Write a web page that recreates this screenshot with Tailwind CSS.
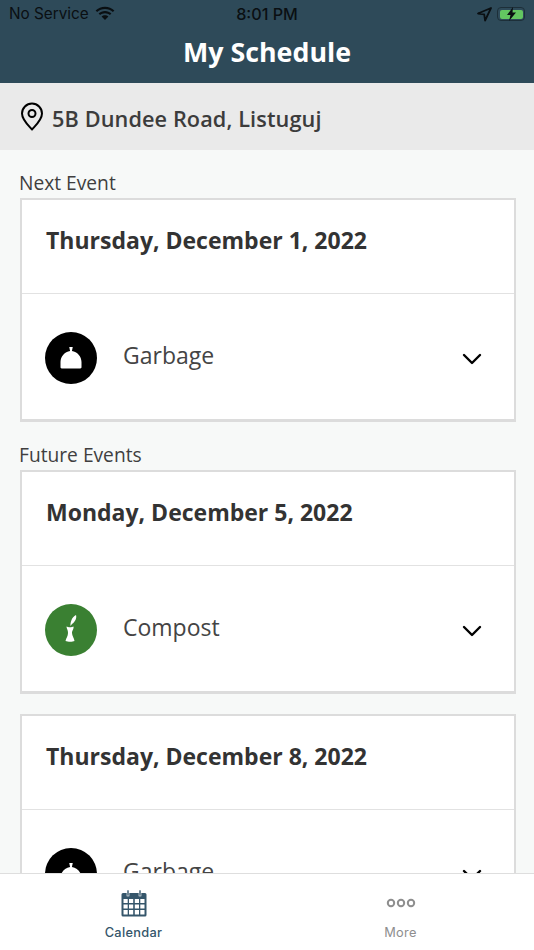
<!DOCTYPE html>
<html lang="en">
<head>
    <meta charset="UTF-8">
    <meta name="viewport" content="width=device-width, initial-scale=1.0">
    <title>My Schedule</title>
    <script src="https://cdn.jsdelivr.net/npm/@tailwindcss/browser@4"></script>
</head>
<body class="w-[534px] h-[950px] overflow-hidden bg-[#f7f9f8] font-['Open_Sans','Noto_Sans',sans-serif]">
    <div class="flex flex-col h-[950px]">
        <!-- Header -->
        <header class="h-[83px] shrink-0 bg-[#2e4a59]">
            <div class="h-[28px] flex items-center justify-between pl-[9px] pr-[9px] font-['Inter',sans-serif] text-[15.300px] text-[#0a0f12]">
                <div class="flex-1 flex items-center gap-[6px]">
                    <span>No Service</span>
                    <svg class="w-[20px] h-[15px] mb-[2px]" viewBox="0 0 20 15"><path d="M10 3c3 0 5.800 1.100 7.900 3.100l1.500-1.600C16.900 2.100 13.600.7 10 .7S3.100 2.100.6 4.500l1.500 1.600C4.200 4.100 7 3 10 3z" fill="#0a0f12"/><path d="M10 7.200c1.900 0 3.600.7 4.900 1.900l1.500-1.600C14.700 5.900 12.500 5 10 5s-4.700.9-6.400 2.500l1.500 1.600C6.400 7.900 8.100 7.200 10 7.200z" fill="#0a0f12"/><path d="M10 9.200c-1.300 0-2.500.5-3.400 1.300L10 14l3.400-3.500c-.9-.8-2.100-1.300-3.400-1.300z" fill="#0a0f12"/></svg>
                </div>
                <span class="font-medium text-[16.200px]">8:01 PM</span>
                <div class="flex-1 flex items-center justify-end gap-[5px]">
                    <svg class="w-[15px] h-[15px]" viewBox="0 0 15 15"><path d="M14 1L1 6.500l6.200.9.900 6.100z" fill="none" stroke="#0a0f12" stroke-width="1.800" stroke-linejoin="round"/></svg>
                    <div class="relative w-[28px] h-[14px] rounded-[4px] border border-[#1d2f39] p-[1.500px] flex">
                        <div class="flex-1 rounded-[2px] bg-[#63c661]"></div>
                        <svg class="absolute left-[7px] top-[-1px] w-[13px] h-[14px]" viewBox="0 0 13 14"><path d="M8 0L2 8h3.500L4 14l7-8.500H7.500z" fill="#0a0f12"/></svg>
                    </div>
                </div>
            </div>
            <h1 class="mt-[6px] text-center text-white text-[26.800px] leading-[36px] font-bold">My Schedule</h1>
        </header>

        <!-- Address -->
        <div class="h-[67px] shrink-0 bg-[#eaeaea] flex items-center pl-[20px] gap-[8px]">
            <svg class="w-[24px] h-[29px]" viewBox="0 0 24 29" fill="none" stroke="#000" stroke-width="2"><path d="M12 27.500C9 24 2 18 2 11.500a10 10 0 0 1 20 0C22 18 15 24 12 27.500z" stroke-linejoin="round"/><circle cx="12" cy="11.500" r="3.500"/></svg>
            <span class="mt-[5px] text-[21.700px] leading-[30px] font-semibold text-[#3c3c3c] tracking-[0.1px]">5B Dundee Road, Listuguj</span>
        </div>

        <!-- Event list -->
        <main class="flex-1 overflow-hidden pl-[20px] pr-[18px]">
            <h2 class="mt-[19px] -ml-[1px] text-[19.200px] leading-[27px] text-[#3f3f3f]">Next Event</h2>
            <section class="mt-[2px] h-[224px] bg-white border-2 border-b-[3px] border-[#dcdcdc] overflow-hidden">
                <div class="h-[94px] pl-[24px] pt-[23px] border-b border-[#e2e2e2] text-[23px] leading-[34px] font-bold text-[#333]">Thursday, December 1, 2022</div>
                <div class="h-[125px] flex items-center pl-[23px] pr-[32px] pt-[2px]">
                    <div class="w-[52px] h-[52px] rounded-full bg-black flex items-center justify-center">
                        <svg class="w-[28px] h-[28px]" viewBox="0 0 24 24"><path d="M10.500 2.500h3l-.700 3.500c4.500.700 8.200 4.500 8.200 9.500v4.500c0 .600-.400 1-1 1H4c-.600 0-1-.400-1-1v-4.500C3 10.500 6.700 6.700 11.200 6z" fill="#fff"/></svg>
                    </div>
                    <span class="ml-[26px] text-[23px] text-[#444] mb-[5px]">Garbage</span>
                    <svg class="ml-auto w-[20px] h-[12px] mt-[2px]" viewBox="0 0 20 12" fill="none" stroke="#000" stroke-width="2.400" stroke-linecap="round" stroke-linejoin="round"><path d="M2 2l8 8 8-8"/></svg>
                </div>
            </section>

            <h2 class="mt-[19px] -ml-[1px] text-[19.200px] leading-[27px] text-[#3f3f3f]">Future Events</h2>
            <section class="mt-[2px] h-[224px] bg-white border-2 border-b-[3px] border-[#dcdcdc] overflow-hidden">
                <div class="h-[94px] pl-[24px] pt-[23px] border-b border-[#e2e2e2] text-[23px] leading-[34px] font-bold text-[#333]">Monday, December 5, 2022</div>
                <div class="h-[125px] flex items-center pl-[23px] pr-[32px] pt-[2px]">
                    <div class="w-[52px] h-[52px] rounded-full bg-[#3a8032] flex items-center justify-center">
                        <svg class="w-[24px] h-[34px]" viewBox="0 0 24 34"><path d="M17 2c1 3-1 7-4 9l-1.500 2c-.300-3 1-9 5.500-11z" fill="#fff"/><path d="M7.500 13.500c1.500 1 5.500 1 7 0 .500 3-1.500 3.500-1.500 6.500s2.200 5 2.500 8c-2 1-6.500 1-9 0 .500-3 2.500-4.500 2.500-8s-1.200-3.500-1.500-6.500z" fill="#fff"/></svg>
                    </div>
                    <span class="ml-[26px] text-[23px] text-[#444] mb-[5px]">Compost</span>
                    <svg class="ml-auto w-[20px] h-[12px] mt-[2px]" viewBox="0 0 20 12" fill="none" stroke="#000" stroke-width="2.400" stroke-linecap="round" stroke-linejoin="round"><path d="M2 2l8 8 8-8"/></svg>
                </div>
            </section>

            <section class="mt-[20px] h-[224px] bg-white border-2 border-b-[3px] border-[#dcdcdc] overflow-hidden">
                <div class="h-[94px] pl-[24px] pt-[23px] border-b border-[#e2e2e2] text-[23px] leading-[34px] font-bold text-[#333]">Thursday, December 8, 2022</div>
                <div class="h-[125px] flex items-center pl-[23px] pr-[32px] pt-[2px]">
                    <div class="w-[52px] h-[52px] rounded-full bg-black flex items-center justify-center">
                        <svg class="w-[28px] h-[28px]" viewBox="0 0 24 24"><path d="M10.500 2.500h3l-.700 3.500c4.500.700 8.200 4.500 8.200 9.500v4.500c0 .600-.400 1-1 1H4c-.600 0-1-.400-1-1v-4.500C3 10.500 6.700 6.700 11.200 6z" fill="#fff"/></svg>
                    </div>
                    <span class="ml-[26px] text-[23px] text-[#444] mb-[5px]">Garbage</span>
                    <svg class="ml-auto w-[20px] h-[12px] mt-[2px]" viewBox="0 0 20 12" fill="none" stroke="#000" stroke-width="2.400" stroke-linecap="round" stroke-linejoin="round"><path d="M2 2l8 8 8-8"/></svg>
                </div>
            </section>
        </main>

        <!-- Tab bar -->
        <nav class="h-[77px] shrink-0 bg-white border-t border-[#dedede] flex font-['Inter',sans-serif]">
            <div class="flex-1 flex flex-col items-center pt-[15px] text-[#35566b]">
                <svg class="w-[26px] h-[28px]" viewBox="0 0 26 28"><path d="M2 4h22a1.500 1.500 0 0 1 1.500 1.500V26a1.500 1.500 0 0 1-1.500 1.500H2A1.500 1.500 0 0 1 .5 26V5.500A1.500 1.500 0 0 1 2 4z" fill="#35566b"/><rect x="6" y="1" width="2" height="6" fill="#35566b" stroke="#fff" stroke-width=".6"/><rect x="18" y="1" width="2" height="6" fill="#35566b" stroke="#fff" stroke-width=".6"/><path d="M2.500 10h4.200v4H2.500zM8 10h4.200v4H8zM13.800 10H18v4h-4.200zM19.300 10h4.200v4h-4.200zM2.500 15.500h4.200v4H2.500zM8 15.500h4.200v4H8zM13.800 15.500H18v4h-4.200zM19.300 15.500h4.200v4h-4.200zM2.500 21h4.200v4.500H2.500zM8 21h4.200v4.500H8zM13.800 21H18v4.500h-4.200zM19.300 21h4.200v4.500h-4.200z" fill="#fff"/></svg>
                <span class="mt-[7px] text-[12.800px] leading-[18px] font-medium tracking-[0.3px]">Calendar</span>
            </div>
            <div class="flex-1 flex flex-col items-center pt-[15px] text-[#8e8e8e]">
                <svg class="w-[30px] h-[28px]" viewBox="0 0 30 28" fill="none" stroke="#8e8e8e" stroke-width="2"><circle cx="5" cy="14" r="3.200"/><circle cx="15" cy="14" r="3.200"/><circle cx="25" cy="14" r="3.200"/></svg>
                <span class="mt-[7px] text-[12.800px] leading-[18px] tracking-[0.3px]">More</span>
            </div>
        </nav>
    </div>
</body>
</html>
